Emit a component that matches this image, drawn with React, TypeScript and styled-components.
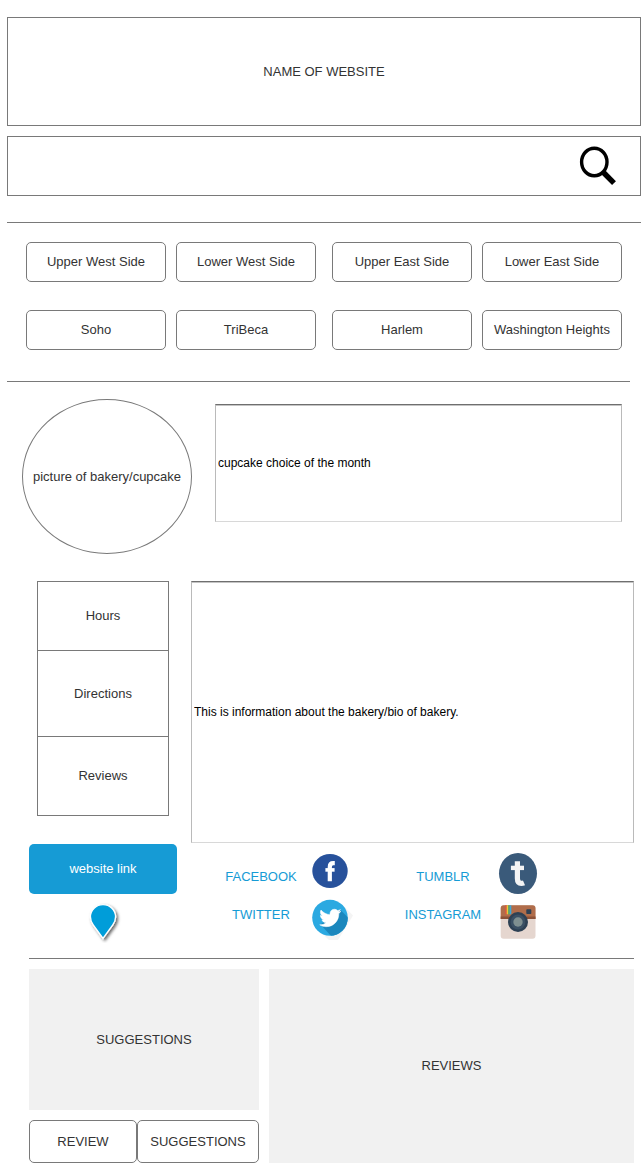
import React from "react";
import styled, { createGlobalStyle } from "styled-components";
import { FaTwitter } from "react-icons/fa";

const line = "#797979";
const ink = "#333333";
const blue = "#169bd5";

const GlobalStyle = createGlobalStyle`
  *, *::before, *::after { box-sizing: border-box; }
  body {
    margin: 0;
    background: #ffffff;
    color: ${ink};
    font: 13px/16px "Liberation Sans", Arial, sans-serif;
  }
  button, input { font: inherit; color: inherit; margin: 0; }
  a { color: inherit; text-decoration: none; }
  svg { display: block; flex: none; }
`;

const Page = styled.div`
  padding-top: 17px;
`;

const Banner = styled.header`
  display: flex;
  align-items: center;
  justify-content: center;
  height: 109px;
  margin-left: 7px;
  border: 1px solid ${line};
`;

const SiteName = styled.h1`
  margin: 0;
  font-size: 13px;
  font-weight: 400;
`;

const SearchBar = styled.form`
  display: flex;
  align-items: center;
  height: 60px;
  margin: 10px 0 26px 7px;
  padding-right: 22px;
  border: 1px solid ${line};
`;

const SearchInput = styled.input`
  flex: 1;
  min-width: 0;
  height: 100%;
  padding: 0 16px;
  border: 0;
  outline: none;
  background: transparent;
`;

const IconButton = styled.button`
  padding: 0;
  border: 0;
  background: none;
`;

const Divider = styled.hr<{ $left?: number; $right?: number }>`
  height: 1px;
  margin: 0 ${(p) => p.$right ?? 0}px 0 ${(p) => p.$left ?? 7}px;
  border: 0;
  background: ${line};
`;

const Areas = styled.nav`
  display: grid;
  grid-template-columns: 1fr 1fr;
  column-gap: 16px;
  padding: 19px 19px 31px 26px;
`;

const AreaGroup = styled.div`
  display: grid;
  grid-template-columns: 1fr 1fr;
  gap: 28px 10px;
`;

const OutlineButton = styled.button<{ $height?: number }>`
  height: ${(p) => p.$height ?? 40}px;
  padding: 0;
  border: 1px solid ${line};
  border-radius: 5px;
  background: #ffffff;
  white-space: nowrap;
`;

const Feature = styled.section`
  display: flex;
  gap: 23px;
  padding: 17px 19px 27px 22px;
`;

const Picture = styled.div`
  display: flex;
  flex: none;
  align-items: center;
  justify-content: center;
  width: 170px;
  height: 155px;
  border: 1px solid ${line};
  border-radius: 50%;
`;

const TextField = styled.input<{ $height: number }>`
  width: 100%;
  min-width: 0;
  height: ${(p) => p.$height}px;
  padding: 0 2px;
  border: 1px solid #bababa;
  border-top-color: #6f6f6f;
  border-bottom-color: #d8d8d8;
  border-radius: 0;
  outline: none;
  background: #ffffff;
  box-shadow: inset 0 1px 0 #c4c4c4;
  color: #000000;
  font-size: 12px;
`;

const MonthlyChoice = styled.div`
  flex: 1;
  padding-top: 5px;
`;

const Details = styled.section`
  display: flex;
  gap: 14px;
  padding: 0 7px 15px 29px;
`;

const SideColumn = styled.div`
  display: flex;
  flex: none;
  flex-direction: column;
  align-items: center;
  width: 148px;
`;

const SideMenu = styled.nav`
  display: flex;
  flex-direction: column;
  width: 132px;
  margin-bottom: 28px;
  border: 1px solid ${line};
`;

const SideItem = styled.button<{ $height: number }>`
  height: ${(p) => p.$height}px;
  padding: 0;
  border: 0;
  background: #ffffff;

  & + & {
    border-top: 1px solid ${line};
  }
`;

const WebsiteLink = styled.a`
  display: flex;
  align-items: center;
  justify-content: center;
  width: 100%;
  height: 50px;
  margin-bottom: 7px;
  border-radius: 5px;
  background: ${blue};
  color: #ffffff;
`;

const MainColumn = styled.div`
  flex: 1;
  min-width: 0;
`;

const Socials = styled.div`
  display: flex;
  gap: 54px;
  padding: 4px 0 0 31px;
`;

const SocialList = styled.ul`
  margin: 0;
  padding: 0;
  list-style: none;
`;

const SocialLabel = styled.span`
  width: 78px;
  text-align: center;
`;

const SocialLink = styled.a<{ $gap: number }>`
  display: flex;
  align-items: center;
  gap: ${(p) => p.$gap}px;
  height: 48px;
  color: ${blue};

  li:first-child > & ${SocialLabel} {
    padding-top: 12px;
  }
  li:last-child > & ${SocialLabel} {
    padding-bottom: 8px;
  }
`;

const Feedback = styled.section`
  display: flex;
  gap: 10px;
  padding: 10px 7px 0 29px;
`;

const FeedbackColumn = styled.div`
  display: flex;
  flex: none;
  flex-direction: column;
  gap: 10px;
  width: 230px;
`;

const Panel = styled.div<{ $height?: number }>`
  display: flex;
  flex: ${(p) => (p.$height ? "none" : "1")};
  align-items: center;
  justify-content: center;
  height: ${(p) => (p.$height ? p.$height + "px" : "auto")};
  background: #f1f1f1;
`;

const ButtonPair = styled.div`
  display: grid;
  grid-template-columns: 108px 1fr;
`;

const SearchIcon = () => (
  <svg width="40" height="40" viewBox="0 0 40 40" fill="none" stroke="#000" aria-hidden="true">
    <ellipse cx="16.3" cy="16" rx="12.7" ry="13.8" strokeWidth="3.4" />
    <path d="M24.5 25.5 36 37.2" strokeWidth="5.4" />
  </svg>
);

const PinIcon = () => (
  <svg width="40" height="42" viewBox="0 0 40 42" role="img" aria-label="Map location">
    <defs>
      <filter id="pin-shadow" x="-30%" y="-30%" width="170%" height="170%">
        <feDropShadow dx="1.8" dy="1.8" stdDeviation="1.5" floodColor="#000" floodOpacity="0.6" />
      </filter>
    </defs>
    <path
      d="M20 37.4 10.2 23.8C8.3 21.2 7.4 18.8 7.4 15.8a12.6 12.2 0 0 1 25.2 0C32.6 18.8 31.7 21.2 29.8 23.8Z"
      fill="#009dd9"
      stroke="#fff"
      strokeWidth="1.4"
      filter="url(#pin-shadow)"
    />
  </svg>
);

const FacebookIcon = () => (
  <svg width="40" height="48" viewBox="0 0 40 48" aria-hidden="true">
    <ellipse cx="20" cy="24" rx="17.7" ry="17" fill="#27519b" />
    <g fill="none" stroke="#fff">
      <path d="M19.8 34.3V20Q19.8 16.2 23.2 16.2H24.8" strokeWidth="4.2" />
      <path d="M15.4 22.9H24.6" strokeWidth="3.6" />
    </g>
  </svg>
);

const TwitterIcon = () => (
  <svg width="40" height="48" viewBox="0 0 40 48" overflow="visible" aria-hidden="true">
    <path d="M32.5 10 43 20.5 28 45 19 45 7.5 34Z" fill="#f4f4f4" />
    <clipPath id="twitter-disc">
      <ellipse cx="20" cy="22.8" rx="17.8" ry="18" />
    </clipPath>
    <g clipPath="url(#twitter-disc)">
      <rect width="40" height="48" fill="#2ba9e1" />
      <path d="M30 14.5 46 30.5 32 50 22 42 10.5 29.5Z" fill="#1b87bd" />
    </g>
    <FaTwitter x="9.5" y="12.2" size={21.5} color="#fff" stroke="#fff" strokeWidth={12} />
  </svg>
);

const TumblrIcon = () => (
  <svg width="40" height="48" viewBox="0 0 40 48" aria-hidden="true">
    <ellipse cx="20" cy="26.5" rx="19" ry="20.5" fill="#3a5a7a" />
    <g fill="none" stroke="#f4f4f4">
      <path d="M19.4 14.2V31.6Q19.4 36.4 23.4 36.4 24.6 36.4 26 35.8" strokeWidth="5.2" />
      <path d="M12.9 20.9H26" strokeWidth="4.4" />
    </g>
  </svg>
);

const InstagramIcon = () => (
  <svg width="40" height="48" viewBox="0 0 40 48" aria-hidden="true">
    <rect x="2.7" y="10.3" width="34.8" height="33.4" rx="3" fill="#e5d6cf" />
    <path d="M2.7 24V13.3a3 3 0 0 1 3-3h28.8a3 3 0 0 1 3 3V24Z" fill="#b06d4b" />
    <path d="M2.7 21.5h34.8V24H2.7Z" fill="#8c5238" />
    <path d="M7.2 10.3h1.5v9H7.2Z" fill="#e0543e" />
    <path d="M8.7 10.3h1.5v9H8.7Z" fill="#f2c636" />
    <path d="M10.2 10.3h1.5v9h-1.5Z" fill="#4fb56b" />
    <path d="M11.7 10.3h1.6v9h-1.6Z" fill="#3fa7d6" />
    <rect x="28.3" y="14.3" width="5" height="4.8" rx="0.8" fill="#2e4154" />
    <circle cx="20" cy="27" r="10" fill="#2e4154" />
    <circle cx="20" cy="27" r="7.4" fill="#3b5064" />
    <circle cx="20" cy="27" r="4.7" fill="#7f8f90" />
  </svg>
);

const areaGroups = [
  ["Upper West Side", "Lower West Side", "Soho", "TriBeca"],
  ["Upper East Side", "Lower East Side", "Harlem", "Washington Heights"],
];

const sideItems = [
  { name: "Hours", height: 68 },
  { name: "Directions", height: 86 },
  { name: "Reviews", height: 79 },
];

const socialGroups = [
  {
    gap: 10,
    links: [
      { name: "FACEBOOK", Icon: FacebookIcon },
      { name: "TWITTER", Icon: TwitterIcon },
    ],
  },
  {
    gap: 16,
    links: [
      { name: "TUMBLR", Icon: TumblrIcon },
      { name: "INSTAGRAM", Icon: InstagramIcon },
    ],
  },
];

export default function App() {
  return (
    <>
      <GlobalStyle />
      <Page>
        <Banner>
          <SiteName>NAME OF WEBSITE</SiteName>
        </Banner>
        <SearchBar role="search" onSubmit={(e) => e.preventDefault()}>
          <SearchInput type="search" aria-label="Search" />
          <IconButton type="submit" aria-label="Search">
            <SearchIcon />
          </IconButton>
        </SearchBar>
        <Divider />
        <Areas aria-label="Neighborhoods">
          {areaGroups.map((group) => (
            <AreaGroup key={group[0]}>
              {group.map((area) => (
                <OutlineButton key={area} type="button">
                  {area}
                </OutlineButton>
              ))}
            </AreaGroup>
          ))}
        </Areas>
        <Divider $right={11} />
        <Feature>
          <Picture>picture of bakery/cupcake</Picture>
          <MonthlyChoice>
            <TextField
              type="text"
              $height={118}
              aria-label="Cupcake of the month"
              defaultValue="cupcake choice of the month"
            />
          </MonthlyChoice>
        </Feature>
        <Details>
          <SideColumn>
            <SideMenu aria-label="Bakery">
              {sideItems.map((item) => (
                <SideItem key={item.name} type="button" $height={item.height}>
                  {item.name}
                </SideItem>
              ))}
            </SideMenu>
            <WebsiteLink href="#website">website link</WebsiteLink>
            <PinIcon />
          </SideColumn>
          <MainColumn>
            <TextField
              type="text"
              $height={262}
              aria-label="About the bakery"
              defaultValue="This is information about the bakery/bio of bakery."
            />
            <Socials>
              {socialGroups.map((group) => (
                <SocialList key={group.gap}>
                  {group.links.map(({ name, Icon }) => (
                    <li key={name}>
                      <SocialLink href={"#" + name.toLowerCase()} $gap={group.gap}>
                        <SocialLabel>{name}</SocialLabel>
                        <Icon />
                      </SocialLink>
                    </li>
                  ))}
                </SocialList>
              ))}
            </Socials>
          </MainColumn>
        </Details>
        <Divider $left={29} $right={7} />
        <Feedback>
          <FeedbackColumn>
            <Panel $height={141}>SUGGESTIONS</Panel>
            <ButtonPair>
              <OutlineButton type="button" $height={43}>
                REVIEW
              </OutlineButton>
              <OutlineButton type="button" $height={43}>
                SUGGESTIONS
              </OutlineButton>
            </ButtonPair>
          </FeedbackColumn>
          <Panel>REVIEWS</Panel>
        </Feedback>
      </Page>
    </>
  );
}
